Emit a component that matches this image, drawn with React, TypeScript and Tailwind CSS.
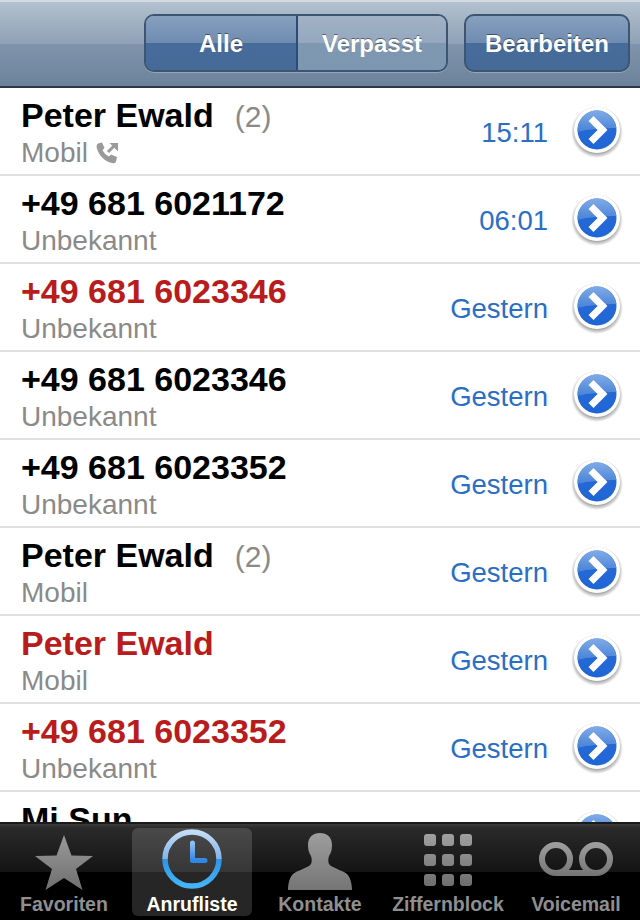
import React from "react";

type Call = {
  name: string;
  count?: string;
  sub: string;
  time: string;
  missed?: boolean;
  outgoing?: boolean;
};

const calls: Call[] = [
  { name: "Peter Ewald", count: "(2)", sub: "Mobil", time: "15:11", outgoing: true },
  { name: "+49 681 6021172", sub: "Unbekannt", time: "06:01" },
  { name: "+49 681 6023346", sub: "Unbekannt", time: "Gestern", missed: true },
  { name: "+49 681 6023346", sub: "Unbekannt", time: "Gestern" },
  { name: "+49 681 6023352", sub: "Unbekannt", time: "Gestern" },
  { name: "Peter Ewald", count: "(2)", sub: "Mobil", time: "Gestern" },
  { name: "Peter Ewald", sub: "Mobil", time: "Gestern", missed: true },
  { name: "+49 681 6023352", sub: "Unbekannt", time: "Gestern", missed: true },
  // last row sits under the tab bar, only the name peeks out
  { name: "Mi Sun", sub: "", time: "" },
];

const DisclosureIcon = () => (
  <svg width="52" height="60" viewBox="0 0 52 60" className="shrink-0">
    <defs>
      <radialGradient id="discShadow" cx="50%" cy="50%" r="50%">
        <stop offset="80%" stopColor="#000" stopOpacity="0.38" />
        <stop offset="100%" stopColor="#000" stopOpacity="0" />
      </radialGradient>
      <linearGradient id="discBlue" x1="0" y1="0" x2="0" y2="1">
        <stop offset="0%" stopColor="#2a6bd4" />
        <stop offset="100%" stopColor="#1f66d6" />
      </linearGradient>
      <linearGradient id="discGloss" x1="0" y1="0" x2="0" y2="1">
        <stop offset="0%" stopColor="#7fabe6" />
        <stop offset="100%" stopColor="#4a82d8" />
      </linearGradient>
    </defs>
    <circle cx="26" cy="31" r="26" fill="url(#discShadow)" />
    <circle cx="26" cy="29" r="23" fill="#fff" />
    <circle cx="26" cy="29" r="19.5" fill="url(#discBlue)" />
    <path d="M6.6 31 A19.5 19.5 0 0 1 45.4 27 C36 27 16 28 6.6 31 Z" fill="url(#discGloss)" />
    <path d="M20 17.5 L31.5 29 L20 40.5" fill="none" stroke="#fff" strokeWidth="7" strokeLinejoin="miter" />
  </svg>
);

const OutgoingPhone = () => (
  <svg width="24" height="24" viewBox="0 0 24 24" className="ml-[7px] mt-[1px]">
    <path
      d="M3 2.5 L7 1.5 L9.5 7 L7.5 9 C8.5 11.5 11 14 14 15.5 L16 13.5 L22 16 L21 20.5 C20.5 22 19 22.5 17 22 C9.5 20.5 3.5 14 1.8 7 C1.4 5 1.8 3.2 3 2.5 Z"
      fill="#9a9a9a"
    />
    <path d="M13 11 L20 4" stroke="#9a9a9a" strokeWidth="3" />
    <path d="M14.5 2 H23 V10.5 Z" fill="#9a9a9a" />
  </svg>
);

const CallRow = ({ call }: { call: Call }) => (
  <div className="h-[88px] shrink-0 flex items-center bg-white border-b-2 border-[#e0e0e0] pl-[21px] pr-[17px]">
    <div className="flex-1 min-w-0">
      <div className="flex items-baseline h-[43px] pt-[1px] leading-[42px]">
        <span className={`text-[34px] font-bold ${call.missed ? "text-[#b81c1c]" : "text-black"}`}>{call.name}</span>
        {call.count && <span className="ml-[21px] text-[30px] text-[#8a8a8a]">{call.count}</span>}
      </div>
      <div className="flex items-center h-[33px] text-[28px] leading-[33px] text-[#8a8a8a]">
        {call.sub}
        {call.outgoing && <OutgoingPhone />}
      </div>
    </div>
    <span className="mr-[23px] mt-[4px] text-[27.5px] text-[#2a6ec6]">{call.time}</span>
    <DisclosureIcon />
  </div>
);

const Star = () => (
  <svg width="60" height="56" viewBox="0 0 60 56">
    <defs>
      <linearGradient id="tabGray" x1="0" y1="0" x2="0" y2="1">
        <stop offset="0%" stopColor="#9a9a9a" />
        <stop offset="100%" stopColor="#6f6f6f" />
      </linearGradient>
    </defs>
    <path d="M30 0 L37.5 20.5 L59 21 L42 34 L48.5 55 L30 43 L11.5 55 L18 34 L1 21 L22.5 20.5 Z" fill="url(#tabGray)" />
  </svg>
);

const Clock = () => (
  <svg width="60" height="60" viewBox="0 0 60 60">
    <defs>
      <linearGradient id="clockRing" x1="0" y1="0" x2="0" y2="1">
        <stop offset="0%" stopColor="#c4dcf5" />
        <stop offset="50%" stopColor="#7fb4ea" />
        <stop offset="51%" stopColor="#2f93e8" />
        <stop offset="100%" stopColor="#45b4f5" />
      </linearGradient>
      <linearGradient id="clockHand" x1="0" y1="0" x2="0" y2="1">
        <stop offset="0%" stopColor="#8fc0f0" />
        <stop offset="100%" stopColor="#2f86e6" />
      </linearGradient>
    </defs>
    <circle cx="30" cy="30" r="27" fill="none" stroke="url(#clockRing)" strokeWidth="5.5" />
    <path d="M30.5 14 V31.5 H43" fill="none" stroke="url(#clockHand)" strokeWidth="5" strokeLinecap="round" strokeLinejoin="round" />
  </svg>
);

const Person = () => (
  <svg width="64" height="57" viewBox="0 0 64 57">
    <defs>
      <linearGradient id="tabPerson" x1="0" y1="0" x2="0" y2="1">
        <stop offset="0%" stopColor="#9e9e9e" />
        <stop offset="100%" stopColor="#757575" />
      </linearGradient>
    </defs>
    <path
      d="M32 0 C39 0 44 4 44 12 C44 17 43 20 41 23 C40 26 40 29 41 31 C44 35 54 37 59 41 C62 44 64 50 64 57 H0 C0 50 2 44 5 41 C10 37 20 35 23 31 C24 29 24 26 23 23 C21 20 20 17 20 12 C20 4 25 0 32 0 Z"
      fill="url(#tabPerson)"
    />
  </svg>
);

const Keypad = () => (
  <svg width="48" height="52" viewBox="0 0 48 52">
    <defs>
      <linearGradient id="tabKeys" gradientUnits="userSpaceOnUse" x1="0" y1="0" x2="0" y2="52">
        <stop offset="0%" stopColor="#a0a0a0" />
        <stop offset="100%" stopColor="#6e6e6e" />
      </linearGradient>
    </defs>
    {[0, 18, 36].map((x) =>
      [0, 20, 40].map((y) => (
        <rect key={`${x}-${y}`} x={x} y={y} width="12" height="12" rx="3" fill="url(#tabKeys)" />
      ))
    )}
  </svg>
);

const Voicemail = () => (
  <svg width="74" height="34" viewBox="0 0 74 34">
    <defs>
      <linearGradient id="tabVm" gradientUnits="userSpaceOnUse" x1="0" y1="0" x2="0" y2="34">
        <stop offset="0%" stopColor="#a0a0a0" />
        <stop offset="100%" stopColor="#747474" />
      </linearGradient>
    </defs>
    <path
      d="M17 31 H57 M17 31 A14 14 0 1 1 17 3 A14 14 0 0 1 17 31 Z M57 31 A14 14 0 1 1 57 3 A14 14 0 0 1 57 31 Z"
      fill="none"
      stroke="url(#tabVm)"
      strokeWidth="6"
    />
  </svg>
);

const tabs = [
  { label: "Favoriten", icon: <Star />, iconPad: "pt-[7px]" },
  { label: "Anrufliste", icon: <Clock />, iconPad: "pt-[1px]", active: true },
  { label: "Kontakte", icon: <Person />, iconPad: "pt-[5px]" },
  { label: "Ziffernblock", icon: <Keypad />, iconPad: "pt-[6px]" },
  { label: "Voicemail", icon: <Voicemail />, iconPad: "pt-[14px]" },
];

export default function App() {
  return (
    <div className="w-[640px] h-[920px] flex flex-col overflow-hidden bg-white font-['Liberation_Sans',Arial,sans-serif]">
      {/* Nav bar */}
      <header className="h-[88px] shrink-0 flex items-center justify-end pr-[10px] pb-[2px] border-b-2 border-[#2d3642] border-t-2 border-t-[#d5dbe2] bg-[linear-gradient(to_bottom,#b3c1cf_0%,#8ea1b6_50%,#8094ab_50%,#6c829c_100%)]">
        <div className="flex h-[58px] w-[304px] rounded-[10px] border-2 border-[#3d5570] overflow-hidden shadow-[0_1px_0_rgba(255,255,255,0.25)] text-white text-[24px] font-bold [text-shadow:0_-1px_0_rgba(0,0,0,0.45)]">
          <div className="w-[152px] pt-[2px] flex items-center justify-center border-r-2 border-[#2b4c77] bg-[linear-gradient(to_bottom,#87a0bf_0%,#6e8bb0_50%,#466c9b_50%,#466a98_100%)]">
            Alle
          </div>
          <div className="flex-1 pt-[2px] flex items-center justify-center bg-[linear-gradient(to_bottom,#a2b2c6_0%,#94a7bd_50%,#7f98b2_50%,#7e97b1_100%)]">
            Verpasst
          </div>
        </div>
        <div className="ml-[16px] pt-[2px] flex items-center justify-center h-[58px] w-[166px] rounded-[10px] border-2 border-[#3d5570] shadow-[0_1px_0_rgba(255,255,255,0.25)] text-white text-[24px] font-bold [text-shadow:0_-1px_0_rgba(0,0,0,0.45)] bg-[linear-gradient(to_bottom,#87a0bf_0%,#6e8bb0_50%,#466c9b_50%,#466a98_100%)]">
          Bearbeiten
        </div>
      </header>

      {/* Call list */}
      <main className="flex-1 min-h-0 flex flex-col overflow-hidden">
        {calls.map((call, i) => (
          <CallRow key={i} call={call} />
        ))}
      </main>

      {/* Tab bar */}
      <nav className="h-[98px] shrink-0 grid grid-cols-5 pt-[4px] pb-[4px] border-t-2 border-[#1a1a1a] bg-[linear-gradient(to_bottom,#3c3c3c_0px,#2a2a2a_4px,#141414_48px,#000_48px,#000_100%)]">
        {tabs.map((tab) => (
          <div
            key={tab.label}
            className={`mx-[4px] flex flex-col items-center rounded-[6px] ${
              tab.active ? "bg-white/15 text-white" : "text-[#8f8f8f]"
            }`}
          >
            <div className={`h-[64px] flex items-start justify-center ${tab.iconPad}`}>{tab.icon}</div>
            <span className="text-[19.5px] leading-[24px] font-bold whitespace-nowrap">{tab.label}</span>
          </div>
        ))}
      </nav>
    </div>
  );
}
